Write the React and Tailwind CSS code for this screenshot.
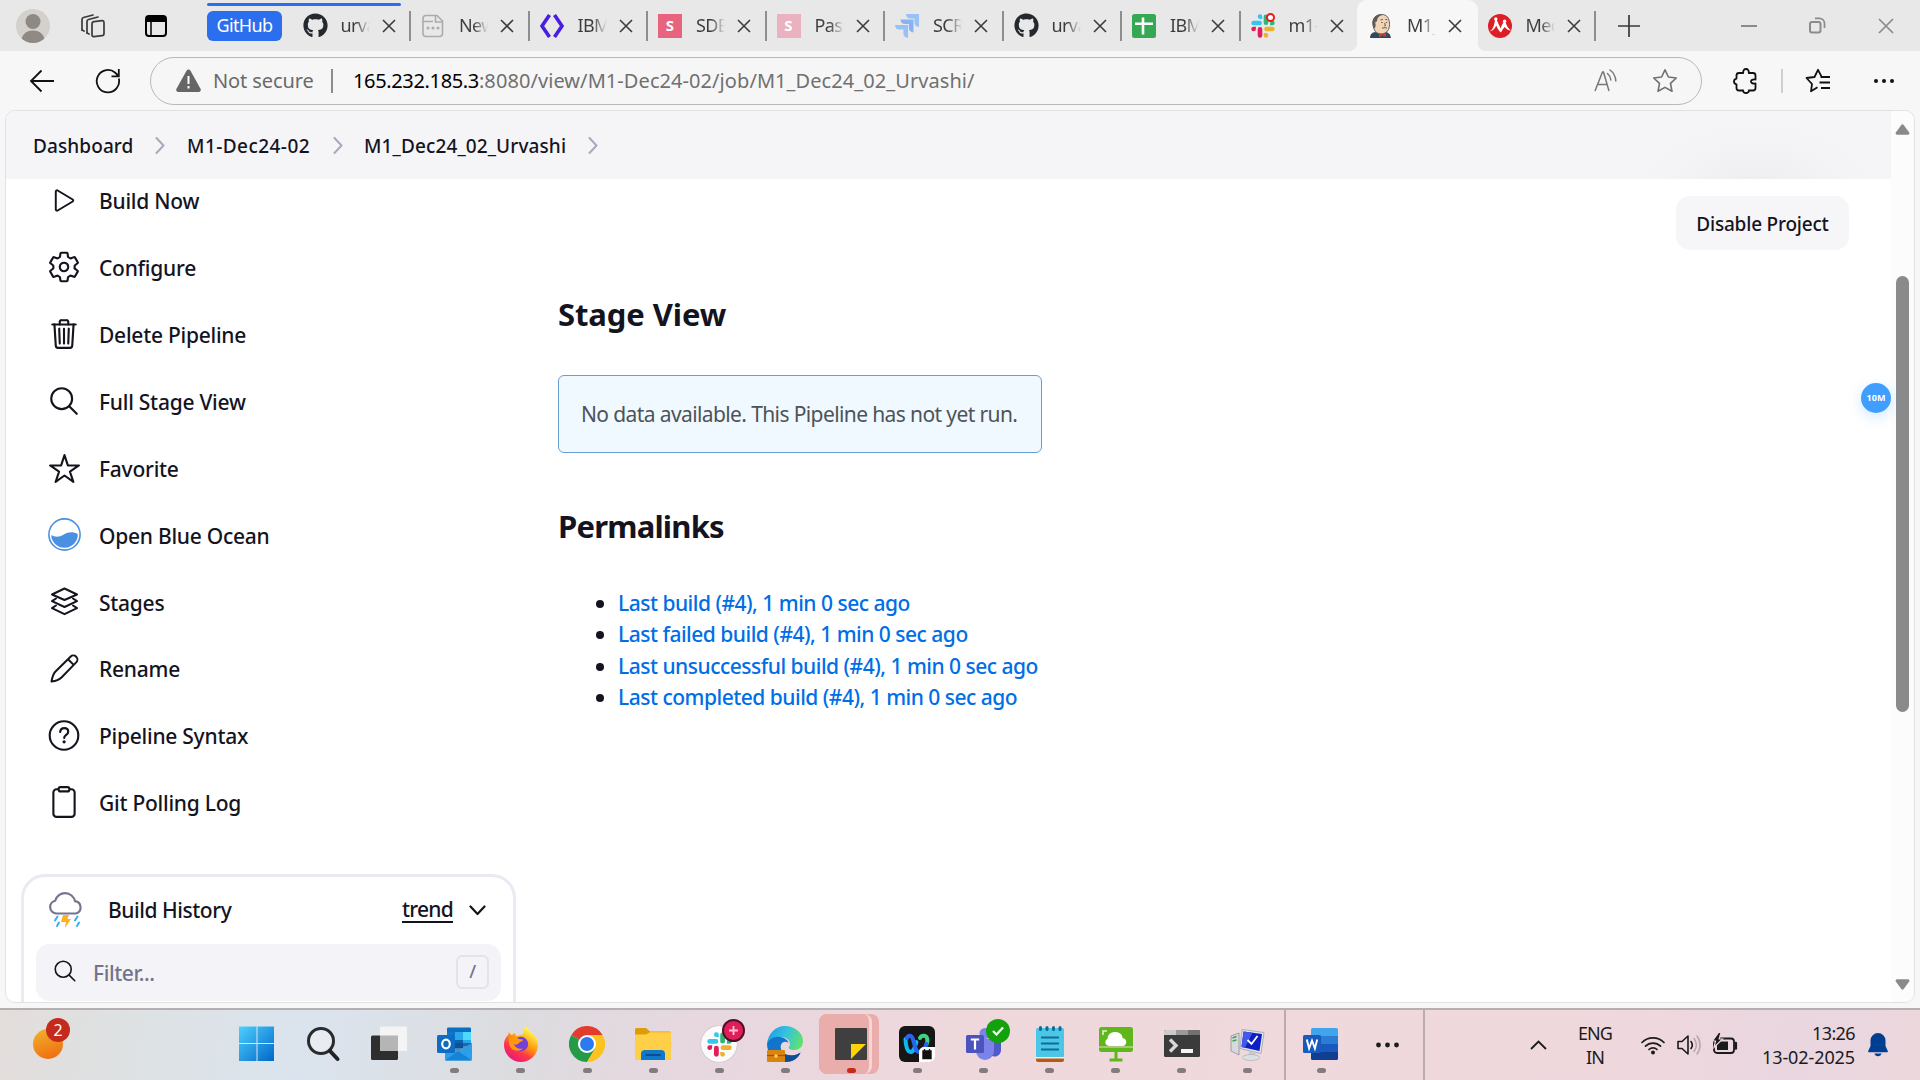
import React from "react";
import { FaGithub } from "react-icons/fa";
import {
  IoPlayOutline,
  IoSettingsOutline,
  IoTrashOutline,
  IoSearchOutline,
  IoStarOutline,
  IoClipboardOutline,
} from "react-icons/io5";

/* ---------- shared drawing helpers ---------- */

function Svg({ w = 24, h, vb, className = "", children }) {
  return (
    <svg
      width={w}
      height={h || w}
      viewBox={vb || `0 0 ${w} ${h || w}`}
      fill="none"
      className={`block shrink-0 ${className}`}
    >
      {children}
    </svg>
  );
}

const CloseX = () => (
  <Svg w={14}>
    <path d="M1 1L13 13M13 1L1 13" stroke="#3c3c3c" strokeWidth="1.6" />
  </Svg>
);

function SlackMark({ w = 24 }) {
  return (
    <Svg w={w} vb="0 0 24 24">
      <g strokeWidth="4.6" strokeLinecap="round">
        <path d="M2.6 9H8.6" stroke="#36c5f0" />
        <path d="M15 2.8V8.8" stroke="#2eb67d" />
        <path d="M15.4 15H21.4" stroke="#ecb22e" />
        <path d="M9 15.4V21.4" stroke="#e01e5a" />
      </g>
      <path d="M9 0.3a2.3 2.3 0 0 0 0 4.6h2.3V2.6A2.3 2.3 0 0 0 9 .3z" fill="#36c5f0" />
      <path d="M23.7 9a2.3 2.3 0 0 0-4.6 0v2.3h2.3A2.3 2.3 0 0 0 23.7 9z" fill="#2eb67d" />
      <path d="M15 23.7a2.3 2.3 0 0 0 0-4.6h-2.3v2.3a2.3 2.3 0 0 0 2.3 2.3z" fill="#ecb22e" />
      <path d="M.3 15a2.3 2.3 0 0 0 4.6 0v-2.3H2.6A2.3 2.3 0 0 0 .3 15z" fill="#e01e5a" />
    </Svg>
  );
}

/* ---------- tab favicons ---------- */

const GithubIcon = () => <FaGithub size={25} color="#24292f" className="-mr-px block shrink-0" />;

const NewPageIcon = () => (
  <Svg w={24}>
    <path d="M5 1.500h11l5.500 5.500v12.500a3 3 0 0 1-3 3H5a3 3 0 0 1-3-3v-15a3 3 0 0 1 3-3z" stroke="#ababab" strokeWidth="1.600" />
    <path d="M2 7.500h10M14.500 2v6h7" stroke="#ababab" strokeWidth="1.600" />
    <g fill="#ababab">
      <circle cx="7" cy="14" r="1.500" />
      <circle cx="12" cy="14" r="1.500" />
      <circle cx="17" cy="14" r="1.500" />
    </g>
  </Svg>
);

const IbmIcon = () => (
  <Svg w={24}>
    <path d="M9.500 1L2 12l7.500 11M14.500 1L22 12l-7.500 11" stroke="#4a1ee0" strokeWidth="3.600" />
  </Svg>
);

const SIcon = ({ faded }) => (
  <div
    className={`flex h-6 w-6 shrink-0 items-center justify-center text-[15px] font-bold text-white ${
      faded ? "bg-[#eab2bf]" : "bg-[#e8637d]"
    }`}
  >
    S
  </div>
);

const JiraIcon = () => (
  <Svg w={24}>
    <path d="M11 0h13v13c-3 0-4.600-2-4.600-4.400V4.600h-4C13 4.600 11 3 11 0z" fill="#99c1f7" />
    <path d="M5.500 5.500h13v13c-3 0-4.600-2-4.600-4.400v-4h-4c-2.400 0-4.400-1.600-4.400-4.600z" fill="#86b3f3" />
    <path d="M0 11h13v13c-3 0-4.600-2-4.600-4.400v-4h-4C2 15.600 0 14 0 11z" fill="#99c1f7" />
  </Svg>
);

const SheetsIcon = () => (
  <Svg w={24}>
    <rect width="24" height="24" rx="2.500" fill="#34a853" />
    <path d="M11 3.500v17M3 9.800h18" stroke="#fff" strokeWidth="2.600" />
  </Svg>
);

const SlackTabIcon = () => (
  <div className="relative">
    <SlackMark />
    <div className="absolute -top-px right-0 h-[9px] w-[9px] rounded-full border-2 border-[#f01818] bg-white" />
  </div>
);

const JenkinsIcon = () => (
  <Svg w={24}>
    <path d="M1 24c0-3.500 1.500-5.500 5-6l6 2.500 4-2.500c3.500 0 5.500 2.500 6 6z" fill="#2f4a5e" />
    <path d="M5.500 16C3.500 12 3 6 6 3 9-.2 16-.5 18.500 3c2.300 3.400 2.700 8.500 1 12.500-1.600 3.400-5 4.800-8 4.300-2.800-.3-5-1.500-6-3.800z" fill="#f0d6b7" stroke="#4a4038" strokeWidth=".8" />
    <path d="M5.300 14.500C2.800 11 2.800 5.500 6 2.700 8 .8 11 .3 14 .7 10 1.500 8 4 8 7.500c-1.400-.3-2 1-1.500 2.500.3 1.500.2 3-1.200 4.500z" fill="#5f5b58" />
    <path d="M11.500 6l2.300-.6M16.300 5.400l2 .4M12.200 8.500h1.400M16.800 8.500h1.400M15.600 9l.8 2.600-1.200.5M13 14.300c1.500-.8 3.500-.8 5-.2" stroke="#403830" strokeWidth=".8" />
    <path d="M10 19l3.500 1.400 3.500-2 .3 4.600-3.600-1.500L10 23.500z" fill="#d33833" />
  </Svg>
);

const MendeleyIcon = () => (
  <Svg w={24}>
    <circle cx="12" cy="12" r="12" fill="#dc1f26" />
    <path
      d="M1.500 17.500c3.500-2 4.700-6 5.500-11.500h1.700c1.500 3 2.800 6 3.800 8.500 1-3 2-5 3.300-6.500h1.700c1 3.500 2.500 6.500 5.500 8.500-3-.2-4.800-1.500-6.300-3.500-1.500 1.500-2.600 3.500-3.700 5.500-2.200-1.500-3.500-4-4.700-7-1.600 3-3.300 5.500-6.800 6z"
      fill="#fff"
    />
    <circle cx="7.800" cy="5" r="1.700" fill="#fff" />
    <circle cx="16.600" cy="7.300" r="1.700" fill="#fff" />
  </Svg>
);

const TABS = [
  { icon: <GithubIcon />, label: "urva" },
  { icon: <NewPageIcon />, label: "New" },
  { icon: <IbmIcon />, label: "IBM" },
  { icon: <SIcon />, label: "SDE" },
  { icon: <SIcon faded />, label: "Pass" },
  { icon: <JiraIcon />, label: "SCR" },
  { icon: <GithubIcon />, label: "urva" },
  { icon: <SheetsIcon />, label: "IBM" },
  { icon: <SlackTabIcon />, label: "m1-", noDivider: true },
  { icon: <JenkinsIcon />, label: "M1_", active: true },
  { icon: <MendeleyIcon />, label: "Med" },
];

function Tab({ icon, label, active, noDivider }) {
  return (
    <div className="relative flex h-[51px] w-[118.5px] shrink-0 items-center">
      {active && (
        <div className="absolute inset-y-0 left-[-2px] right-0 rounded-t-[10px] bg-[#f7f7f7]">
          <div className="absolute bottom-0 -left-2 h-2 w-2 bg-[radial-gradient(circle_at_0_0,#e8e8e8_8px,#f7f7f7_8px)]" />
          <div className="absolute bottom-0 -right-2 h-2 w-2 bg-[radial-gradient(circle_at_100%_0,#e8e8e8_8px,#f7f7f7_8px)]" />
        </div>
      )}
      <div className="relative flex flex-1 items-center pl-[10px]">
        {icon}
        <div className="ml-[14px] w-[29px] overflow-hidden whitespace-nowrap bg-[linear-gradient(90deg,#3c3c3c_50%,transparent)] bg-clip-text text-[18px] tracking-[-0.6px] text-transparent">
          {label}
        </div>
        <div className="ml-[12px]">
          <CloseX />
        </div>
      </div>
      {!active && !noDivider && <div className="h-[30px] w-[2px] bg-[#8e8e8e]" />}
    </div>
  );
}

function TabBar() {
  return (
    <div className="flex h-[51px] items-center bg-[#e8e8e8]">
      <div className="ml-4 h-[34px] w-[34px] overflow-hidden rounded-full bg-[#d4d1cc]">
        <Svg w={34}>
          <circle cx="17" cy="12.500" r="7.500" fill="#8f8984" />
          <path d="M5 34c0-8 5-12.500 12-12.500S29 26 29 34z" fill="#8f8984" />
        </Svg>
      </div>
      <Svg w={26} className="ml-[30px]">
        <g stroke="#3a3a3a" strokeWidth="1.700" strokeLinejoin="round" strokeLinecap="round">
          <rect x="12" y="8" width="12" height="15" rx="2" transform="skewY(-6) translate(0 2)" />
          <path d="M7 20V8.500a2 2 0 0 1 1.500-2L18 4M2 17V6.500a2 2 0 0 1 1.500-2L13 2" />
          <path d="M7 20l2 1M2 17l2 1" />
        </g>
      </Svg>
      <Svg w={22} className="ml-[39px]">
        <rect x="1" y="1" width="20" height="20" rx="3" stroke="#000" strokeWidth="2" />
        <path d="M1 2h20v5H1z" fill="#000" />
        <path d="M6 7v14" stroke="#000" strokeWidth="1.500" />
      </Svg>
      <div className="relative ml-[40px] flex h-[51px] items-center">
        <div className="absolute left-0 top-[3px] h-[3px] w-[194px] rounded-full bg-[#2b6fee]" />
        <div className="flex h-[30px] w-[75px] items-center justify-center rounded-[6px] bg-[#2b6fee] text-[18px] tracking-[-0.6px] text-white">
          GitHub
        </div>
      </div>
      <div className="ml-[10.5px] flex">
        {TABS.map((t, i) => (
          <Tab key={i} {...t} />
        ))}
      </div>
      <Svg w={22} className="ml-[21.5px]">
        <path d="M11 0v22M0 11h22" stroke="#3a3a3a" strokeWidth="1.700" />
      </Svg>
      <div className="ml-auto mr-[26px] flex items-center gap-[52px]">
        <div className="h-[2px] w-[16px] bg-[#8b8b8b]" />
        <Svg w={17}>
          <rect x="1" y="5" width="10.500" height="10.500" rx="2" stroke="#8b8b8b" strokeWidth="2" />
          <path d="M6 1.300h4.500a5 5 0 0 1 5 5V11" stroke="#8b8b8b" strokeWidth="1.700" />
        </Svg>
        <Svg w={16}>
          <path d="M1 1L15 15M15 1L1 15" stroke="#8b8b8b" strokeWidth="1.700" />
        </Svg>
      </div>
    </div>
  );
}

/* ---------- address bar ---------- */

function Toolbar() {
  return (
    <div className="flex h-[59px] items-center bg-[#f7f7f7]">
      <Svg w={26} h={24} className="ml-[29px]">
        <path d="M25 12H2M12.500 1.500L2 12l10.500 10.500" stroke="#111" strokeWidth="1.800" />
      </Svg>
      <Svg w={26} className="ml-[40px]">
        <path d="M23.800 10.500A11.200 11.200 0 1 1 20 4.500L23.500 8M23.800 1v7.300h-7.300" stroke="#111" strokeWidth="1.800" />
      </Svg>
      <div className="ml-[29px] flex h-[48px] w-[1552px] items-center rounded-full border border-[#b9b9b9] bg-[#f6f6f6]">
        <Svg w={25} h={23} className="ml-[25px]">
          <path d="M10.500 1.700a2.300 2.300 0 0 1 4 0l10 18a2.200 2.200 0 0 1-2 3.300h-20a2.200 2.200 0 0 1-2-3.300z" fill="#666" />
          <path d="M12.500 7v8M12.500 17v2.600" stroke="#fff" strokeWidth="2" />
        </Svg>
        <div className="ml-[12px] w-[104px] pt-px text-[20px] tracking-[-0.1px] text-[#6a6a6a]">Not secure</div>
        <div className="ml-[14px] h-6 w-[2px] bg-[#8c8c8c]" />
        <div className="ml-[20px] whitespace-nowrap pt-px text-[20px]">
          <span className="tracking-[-0.35px] text-black">165.232.185.3</span>
          <span className="tracking-[0.07px] text-[#707070]">:8080/view/M1-Dec24-02/job/M1_Dec24_02_Urvashi/</span>
        </div>
        <Svg w={24} className="ml-auto">
          <path d="M1 22L8.500 3h1L15 22M3.500 15.500h9.500" stroke="#777" strokeWidth="1.500" />
          <path d="M13.500 4.500c2 1.600 3 3.700 3.300 6.500M16 1c3.500 2.500 5.500 6 5.800 11" stroke="#777" strokeWidth="1.500" strokeLinecap="round" />
        </Svg>
        <Svg w={26} className="ml-[34px] mr-[23px]">
          <path d="M13 1.800l3.400 7.200 7.900 1-5.800 5.400 1.500 7.900-7-3.900-7 3.900 1.500-7.900L1.700 10l7.900-1z" stroke="#707070" strokeWidth="1.600" strokeLinejoin="round" />
        </Svg>
      </div>
      <Svg w={26} className="ml-[31px]">
        <path d="M6 5h4.200c-.2-2.600 1-4 2.800-4s3 1.400 2.800 4H20a2.500 2.500 0 0 1 2.500 2.500v4c-3-.4-4.500.6-4.500 2s1.500 2.400 4.500 2V20A2.500 2.500 0 0 1 20 22.500h-4.200c.2 1.500-1 2.500-2.800 2.500s-3-1-2.800-2.500H6A2.500 2.500 0 0 1 3.500 20v-3.700C1.800 16 1 15 1 13.500s.8-2.500 2.500-2.800V7.500A2.500 2.500 0 0 1 6 5z" stroke="#111" strokeWidth="1.800" strokeLinejoin="round" />
      </Svg>
      <div className="ml-[22px] h-6 w-[2px] bg-[#cfcfcf]" />
      <Svg w={26} className="ml-[22px]">
        <path d="M12.500 19.300L6 23.300 7 16 1.500 10l8-1L13 1.800l3.300 6.400" stroke="#111" strokeWidth="1.800" strokeLinejoin="round" />
        <path d="M15.500 9H25M14.500 14.500H25M16 20h9" stroke="#111" strokeWidth="1.800" />
      </Svg>
      <Svg w={22} h={6} className="ml-[42px]">
        <g fill="#111">
          <circle cx="3" cy="3" r="2" />
          <circle cx="11" cy="3" r="2" />
          <circle cx="19" cy="3" r="2" />
        </g>
      </Svg>
    </div>
  );
}

/* ---------- Jenkins page ---------- */

const Chevron = ({ className = "" }) => (
  <Svg w={10} h={17} className={className}>
    <path d="M1.500 1l7 7.500-7 7.500" stroke="#a9a8bd" strokeWidth="2" strokeLinecap="round" strokeLinejoin="round" />
  </Svg>
);

const OceanIcon = () => (
  <Svg w={33}>
    <circle cx="16.500" cy="16.500" r="15.600" stroke="#4a90e2" strokeWidth="1.600" />
    <path d="M3.200 17c3.500 2.300 8 2.300 12.300-.2 5-3 9.500-3.200 14.300-.8A13.300 13.300 0 0 1 3.200 17z" fill="#4a90e2" />
  </Svg>
);

const StagesIcon = () => (
  <Svg w={29} className="text-[#14141f]">
    <g stroke="currentColor" strokeWidth="2" strokeLinejoin="round" strokeLinecap="round">
      <path d="M14.500 1.500l12.500 6.000-12.500 5.500L2 7.500z" />
      <path d="M6 11.500l-4 2.700 12.500 5.800L27 14.200l-4-2.700" />
      <path d="M6 18.500l-4 2.700 12.500 6L27 21.200l-4-2.700" />
    </g>
  </Svg>
);

const PencilIcon = () => (
  <Svg w={29}>
    <path
      d="M1.500 27.500c.8-4.500 1.500-7.500 4-10L20.500 2.700a3.900 3.900 0 0 1 5.700 5.700L11.500 23.500c-2.500 2.500-5.500 3.500-10 4zM18 5.200l5.700 5.700"
      stroke="#14141f"
      strokeWidth="2"
      strokeLinejoin="round"
    />
  </Svg>
);

const HelpIcon = () => (
  <Svg w={32}>
    <circle cx="16" cy="15.500" r="14.300" stroke="#14141f" strokeWidth="2.100" />
    <path d="M12.200 12c.2-2.400 1.800-3.800 4-3.800 2.300 0 4 1.400 4 3.500 0 3.200-4 3.200-4 6.200" stroke="#14141f" strokeWidth="2.200" strokeLinecap="round" />
    <circle cx="16.100" cy="21.800" r="1.600" fill="#14141f" />
  </Svg>
);

const MENU = [
  { label: "Build Now", icon: <IoPlayOutline size={31} /> },
  { label: "Configure", icon: <IoSettingsOutline size={34} /> },
  { label: "Delete Pipeline", icon: <IoTrashOutline size={34} /> },
  { label: "Full Stage View", icon: <IoSearchOutline size={34} /> },
  { label: "Favorite", icon: <IoStarOutline size={33} /> },
  { label: "Open Blue Ocean", icon: <OceanIcon /> },
  { label: "Stages", icon: <StagesIcon /> },
  { label: "Rename", icon: <PencilIcon /> },
  { label: "Pipeline Syntax", icon: <HelpIcon /> },
  { label: "Git Polling Log", icon: <IoClipboardOutline size={34} /> },
];

const StormIcon = () => (
  <Svg w={36} h={36}>
    <path d="M8 21.500a6.500 6.500 0 0 1-.8-12.800A10.200 10.200 0 0 1 27 9.200a6.300 6.300 0 0 1 1 12.300z" stroke="#75758f" strokeWidth="2.200" strokeLinejoin="round" />
    <path d="M15 23h6l-1.500 4H23l-6 9 .8-6H13z" fill="#feb21f" />
    <path d="M9.500 24.500l-2.500 4M11 30.500L9 34M29.500 24.500l-2.500 4M31 30.500L29 34" stroke="#3aafe8" strokeWidth="2" strokeLinecap="round" />
  </Svg>
);

function Sidebar() {
  return (
    <div className="w-[552px] shrink-0 text-[21px] font-medium tracking-[-0.25px]">
      <div className="mt-[-12px]">
        {MENU.map((m) => (
          <div key={m.label} className="flex h-[66.9px] items-center pl-[40px]">
            <div className="flex w-[36px] justify-center">{m.icon}</div>
            <div className="ml-[17px] pt-[3px]">{m.label}</div>
          </div>
        ))}
      </div>
      <div className="ml-[15px] mt-[38px] h-[200px] w-[495px] rounded-[24px] border-[3px] border-[#eaeaf3] px-[12px]">
        <div className="flex h-[67px] items-center pl-[12px]">
          <StormIcon />
          <div className="ml-[24px] tracking-[-0.45px]">Build History</div>
          <div className="ml-auto border-b-2 border-[#14141f] text-[21px] leading-[24px] tracking-[-0.75px]">trend</div>
          <Svg w={17} h={11} className="ml-[16px] mr-[15px]">
            <path d="M1.500 1.500l7 7.500 7-7.500" stroke="#14141f" strokeWidth="2.200" strokeLinecap="round" strokeLinejoin="round" />
          </Svg>
        </div>
        <div className="flex h-[57px] items-center rounded-[14px] bg-[#f3f3f8] pl-[16px] pr-[12px]">
          <IoSearchOutline size={26} className="-mt-[2px]" />
          <div className="ml-[15px] pt-[2px] tracking-[-0.4px] text-[#73738c]">Filter...</div>
          <div className="-mt-px ml-auto flex h-[34px] w-[33px] items-center justify-center rounded-[6px] border-2 border-[#e3e3ec] text-[18px] text-[#73738c]">
            /
          </div>
        </div>
      </div>
    </div>
  );
}

const LINKS = [
  "Last build (#4), 1 min 0 sec ago",
  "Last failed build (#4), 1 min 0 sec ago",
  "Last unsuccessful build (#4), 1 min 0 sec ago",
  "Last completed build (#4), 1 min 0 sec ago",
];

function MainPanel() {
  return (
    <div className="flex flex-1 flex-col items-start">
      <div className="mr-[42px] mt-[17px] flex h-[54px] w-[173px] items-center justify-center self-end rounded-[14px] bg-[#f6f6f9] pt-[2px] text-[19px] font-medium tracking-[-0.2px]">
        Disable Project
      </div>
      <h2 className="mt-[44px] text-[31px] font-bold leading-[40px] tracking-[-0.1px]">Stage View</h2>
      <div className="mt-[41px] flex h-[78px] w-[484px] items-center rounded-[6px] border border-[#6a9fd4] bg-[#f0f9ff] pl-[22px] pt-[2px] text-[21px] tracking-[-0.61px] text-[#4d5358]">
        <span className="whitespace-nowrap">No data available. This Pipeline has not yet run.</span>
      </div>
      <h2 className="mt-[53px] text-[31px] font-bold leading-[40px] tracking-[-0.8px]">Permalinks</h2>
      <ul className="mt-[42px] text-[21px] font-medium leading-[31.4px] tracking-[-0.5px]">
        {LINKS.map((l) => (
          <li key={l} className="flex items-center">
            <span className="ml-[38px] h-2 w-2 rounded-full bg-[#14141f]" />
            <a className="ml-[14px] whitespace-nowrap text-[#006ee6]">{l}</a>
          </li>
        ))}
      </ul>
    </div>
  );
}

function Page() {
  return (
    <div className="relative mx-[5px] flex h-[893px] overflow-hidden rounded-[10px] border border-[#e2e2e4] bg-white text-[#14141f]">
      <div className="flex flex-1 flex-col">
        <div className="flex h-[68px] shrink-0 items-center bg-[#f5f5f8] bg-[radial-gradient(ellipse_110px_60px_at_1750px_75px,#eeeef1,transparent)] pl-[27px] text-[19px] font-medium">
          <div className="w-[101px] pt-[2px] tracking-[0.1px]">Dashboard</div>
          <Chevron className="ml-[21px]" />
          <div className="ml-[22px] w-[124px] pt-[2px] tracking-[0.45px]">M1-Dec24-02</div>
          <Chevron className="ml-[22px]" />
          <div className="ml-[21px] w-[204px] pt-[2px] tracking-[0.12px]">M1_Dec24_02_Urvashi</div>
          <Chevron className="ml-[20px]" />
        </div>
        <div className="flex min-h-0 flex-1 overflow-hidden">
          <Sidebar />
          <MainPanel />
        </div>
      </div>
      <div className="flex w-[23px] shrink-0 flex-col items-center bg-[#fcfcfc]">
        <Svg w={15} h={11} className="mt-[13px]">
          <path d="M6.300 1a1.500 1.500 0 0 1 2.400 0l5.500 7.500a1.500 1.500 0 0 1-1.200 2.300H2A1.500 1.500 0 0 1 .8 8.500z" fill="#8a8a8a" />
        </Svg>
        <div className="mt-[141px] h-[436px] w-[13px] rounded-full bg-[#8a8a8a]" />
        <Svg w={15} h={11} className="mb-[12px] mt-auto">
          <path d="M6.300 10a1.500 1.500 0 0 0 2.400 0l5.500-7.500A1.500 1.500 0 0 0 13 .2H2A1.500 1.500 0 0 0 .8 2.500z" fill="#8a8a8a" />
        </Svg>
      </div>
      <div className="absolute left-[1855px] top-[272px] flex h-[30px] w-[30px] items-center justify-center rounded-full bg-[#409eff] text-[9px] font-bold text-white shadow-[0_4px_14px_rgba(64,158,255,0.25)]">
        10M
      </div>
    </div>
  );
}

/* ---------- taskbar ---------- */

const WindowsIcon = () => (
  <Svg w={36}>
    <defs>
      <linearGradient id="win" x1="0" y1="0" x2="1" y2="1">
        <stop stopColor="#4fd0ff" />
        <stop offset="1" stopColor="#0067c9" />
      </linearGradient>
    </defs>
    <path d="M0 .5h17.500V17H0zM18.500.5H35V17H18.500zM0 18h17.500v17H0zM18.500 18H35v17H18.500z" fill="url(#win)" />
  </Svg>
);
const SearchIcon = () => (
  <Svg w={36}>
    <circle cx="16" cy="15" r="12.500" stroke="#2b2b2b" strokeWidth="3" fill="#ffffff55" />
    <path d="M25 25l7.500 8" stroke="#222" strokeWidth="4" strokeLinecap="round" />
  </Svg>
);
const TaskViewIcon = () => (
  <Svg w={36}>
    <rect x="0" y="9.500" width="27" height="24.500" rx="1.500" fill="#2e2e2e" />
    <rect x="9" y=".5" width="27" height="24.500" rx="1.500" fill="#f4f4f4" />
    <path d="M9 9.500h18V25H9z" fill="#b5b5b5" />
  </Svg>
);
const OutlookIcon = () => (
  <Svg w={36}>
    <path d="M11 1.500h22a1 1 0 0 1 1 1V18H10V2.500a1 1 0 0 1 1-1z" fill="#0a6fc0" />
    <path d="M10 6h8v14h-8z" fill="#1274c8" />
    <path d="M18 6h8v8h-8z" fill="#28a8ea" />
    <path d="M26 6h8v8h-8z" fill="#50d9ff" />
    <path d="M18 14h8v8h-8z" fill="#0a64b0" />
    <path d="M26 14h8v6h-8z" fill="#28a8ea" />
    <path d="M35 17v16a1.500 1.500 0 0 1-1.500 1.500h-24A1.500 1.500 0 0 1 8 33V18l13 7z" fill="#2d9fe8" />
    <path d="M35 17L21 25 10 19v-2h24z" fill="#0a4a8c" opacity=".65" />
    <path d="M8 34.500L21 25l14 9.500z" fill="#1583d8" />
    <rect x="0" y="9" width="18" height="18" rx="1.500" fill="#0f6cc4" />
    <ellipse cx="9" cy="18" rx="3.800" ry="4.300" stroke="#fff" strokeWidth="2.200" />
  </Svg>
);
const FirefoxIcon = () => (
  <Svg w={36}>
    <defs>
      <linearGradient id="ff" x1=".85" y1=".05" x2=".25" y2="1">
        <stop offset=".1" stopColor="#fff44f" />
        <stop offset=".45" stopColor="#ff980e" />
        <stop offset=".7" stopColor="#ff3647" />
        <stop offset="1" stopColor="#e31587" />
      </linearGradient>
    </defs>
    <path d="M23 0c2 2 3 5 6 7 4 3 6 7 6 12a17 17 0 0 1-34 0c0-5 2-8 4.500-10.500V6l3 3 3.500-2 1 3c4-1 6-1 8-3-.5-3 0-5 2-7z" fill="url(#ff)" />
    <circle cx="18" cy="18" r="7.200" fill="#7540d8" />
    <path d="M6 12c4-2 8-1 10 1l4 .5c0 2-3 2-4 3.500-2 3-5 1-5 1 1 4 5 5.500 9 4.500-6 5-14 1-14-6z" fill="#ff980e" />
  </Svg>
);
const ChromeIcon = () => (
  <Svg w={36}>
    <path d="M18 18L2.400 9A18 18 0 0 1 33.600 9z" fill="#e33b2e" />
    <path d="M18 18L2.400 9A18 18 0 0 0 18 36l8-13z" fill="#259a48" />
    <path d="M33.600 9A18 18 0 0 1 18 36l8-13.500L18 9z" fill="#fcc31e" />
    <circle cx="18" cy="18" r="9" fill="#fff" />
    <circle cx="18" cy="18" r="7" fill="#2b7af0" />
  </Svg>
);
const FolderIcon = () => (
  <Svg w={36}>
    <path d="M0 3.500A1.500 1.500 0 0 1 1.500 2H11l4 3.500h19.500A1.500 1.500 0 0 1 36 7v8H0z" fill="#dd9c09" />
    <path d="M0 8.500h11L15 6.300h21V33a1 1 0 0 1-1 1H1a1 1 0 0 1-1-1z" fill="#ffcf48" />
    <path d="M6 34V28a4 4 0 0 1 4-4h16a4 4 0 0 1 4 4v6z" fill="#0f78c8" />
    <path d="M11 29h14" stroke="#0a4f90" strokeWidth="2" strokeLinecap="round" />
  </Svg>
);
const SlackIcon = () => (
  <div className="relative flex h-9 w-9 items-center justify-center rounded-full bg-[#fbfbfb] shadow-[0_0_1px_#888]">
    <SlackMark w={25} />
    <div className="absolute -right-[8px] -top-[7px] flex h-[23px] w-[23px] items-center justify-center rounded-full border-2 border-[#4b1226] bg-[#e01e5a]">
      <Svg w={9}>
        <path d="M4.500 0v9M0 4.500h9" stroke="#ffc2d4" strokeWidth="1.800" />
      </Svg>
    </div>
  </div>
);
const EdgeIcon = () => (
  <Svg w={36}>
    <defs>
      <linearGradient id="edge" x1="0" y1=".2" x2="1" y2=".5">
        <stop stopColor="#1b9de0" />
        <stop offset=".5" stopColor="#35c1e0" />
        <stop offset="1" stopColor="#5fe070" />
      </linearGradient>
    </defs>
    <path d="M0 18C1 8 8 0 18 0s18 7 18 15c0 6-4 9-9 9-4 0-6-1.500-5-3 3-4-1-10-8-10C7 11 2 14 0 18z" fill="url(#edge)" />
    <path d="M0 18c1-4 7-8 13-7 5 .8 8 3 8.500 6-4-3-9 0-7.500 6 1.500 6 8 8 13 6.500 3-.8 5-1.800 6.500-3C31 33 25 36 18 36 8 36 0 28 0 18z" fill="#1374cc" />
    <path d="M15 25c3 5 12 6 18.500 1.500C31 33 25 36 18 36z" fill="#0e4f94" />
    <rect x="0" y="24" width="18" height="12" rx="1" fill="#d98310" />
    <path d="M0 29.500h18" stroke="#9a560c" strokeWidth="1.200" />
    <rect x="7.500" y="28.500" width="3" height="3" fill="#ffd75a" />
  </Svg>
);
const StickyIcon = () => (
  <div className="relative flex h-9 w-9 items-center justify-center">
    <div className="absolute -left-[14px] -top-[12px] h-[60px] w-[60px] rounded-[8px] bg-[#e9aeab]" />
    <div className="absolute -left-[14px] -top-[12px] h-[60px] w-[53px] rounded-[8px] border-r-[3px] border-[#f4d6d6] bg-[#e9aeab]" />
    <Svg w={32} className="relative">
      <rect width="32" height="32" rx="1" fill="#3f3f3f" />
      <path d="M16 16h15L16 31z" fill="#fcd20a" />
    </Svg>
  </div>
);
const WebexIcon = () => (
  <Svg w={36}>
    <rect width="36" height="36" rx="6" fill="#161616" />
    <g strokeWidth="4" strokeLinecap="round">
      <path d="M21 12c2-3.500 6-2.500 7 0 .8 2 .3 4.500-.5 6.500" stroke="#3ed37c" />
      <path d="M6.500 13c0 7 2 13 5 13 3.500 0 4.500-6 6-10" stroke="#10b6f0" />
      <path d="M8 12c1-3 4-3 5.500 0C16 18 16 26 20 26c3.500 0 6-3.500 7.500-8" stroke="#2b63f0" />
    </g>
    <path d="M20 26a5 5 0 0 1 5-5h11v10a5 5 0 0 1-5 5H20z" fill="#fff" />
    <path d="M24 25h8v7.500h-8zM25.500 23v2M30.500 23v2" fill="#111" stroke="#111" strokeWidth="1.400" />
  </Svg>
);
const TeamsIcon = () => (
  <div className="relative">
    <Svg w={36}>
      <circle cx="29" cy="10" r="4" fill="#5059c9" />
      <circle cx="19" cy="7.500" r="5.500" fill="#7b83eb" />
      <path d="M24 13h11v11a6.500 6.500 0 0 1-10 5.500z" fill="#5059c9" />
      <path d="M10 13h18v12a9 9 0 0 1-18 0z" fill="#7b83eb" />
      <rect x="0" y="9" width="18" height="18" rx="1.500" fill="#4b53bc" />
      <path d="M4.800 13.500h8.400M9 13.500v10" stroke="#fff" strokeWidth="2.200" />
    </Svg>
    <div className="absolute -right-[8px] -top-[7px] flex h-6 w-6 items-center justify-center rounded-full bg-[#13a10e]">
      <Svg w={12} h={10}>
        <path d="M1 5l3.500 3.500L11 1.500" stroke="#fff" strokeWidth="2.200" />
      </Svg>
    </div>
  </div>
);
const NotepadIcon = () => (
  <Svg w={28} h={36}>
    <path d="M0 31h28v3a2 2 0 0 1-2 2H2a2 2 0 0 1-2-2z" fill="#b65a12" />
    <rect x="0" y="2" width="28" height="29.500" rx="1.500" fill="#4cc6e6" />
    <path d="M0 31h28v1.500H0z" fill="#f4f4f4" />
    <path d="M5 11.500h18M5 17.500h18M5 23.500h18" stroke="#0a6f93" strokeWidth="2" />
    <path d="M4.500 1.500v2M11 1.500v2M17.500 1.500v2M24 1.500v2" stroke="#0a6f93" strokeWidth="3" strokeLinecap="round" />
  </Svg>
);
const CloudPcIcon = () => (
  <Svg w={34} h={36}>
    <rect x="0" y="1" width="34" height="25" rx="2.500" fill="#5fb71b" />
    <path d="M17 26v7M10.500 34h13" stroke="#5fb71b" strokeWidth="3" />
    <path d="M0 21h34" stroke="#efd9dc" strokeWidth="1.200" />
    <path d="M11 20c-6 0-5.500-6-2.500-7C8.500 8 13 5.500 17 6s6.500 2.500 6.500 6c5 .5 5 8 0 8z" fill="#fff" />
    <path d="M4 9V5h4" stroke="#dff3cf" strokeWidth="1.600" />
  </Svg>
);
const TerminalIcon = () => (
  <Svg w={36}>
    <rect x="0" y="4" width="36" height="27" rx="1.500" fill="#3b3b3b" />
    <path d="M0 5.500A1.500 1.500 0 0 1 1.500 4H12v5H0z" fill="#cbcbcb" />
    <path d="M12 4h12v5H12z" fill="#9a9a9a" />
    <path d="M24 4h10.500A1.500 1.500 0 0 1 36 5.500V9H24z" fill="#717171" />
    <path d="M6 13.500l6 6-6 6" stroke="#d8d8d8" strokeWidth="3.400" />
    <path d="M17 25h12" stroke="#f4f4f4" strokeWidth="4" />
  </Svg>
);
const RemoteIcon = () => (
  <Svg w={36}>
    <path d="M1 10l8-3v22l-8-4z" fill="#d6d9de" stroke="#8a8f98" strokeWidth=".8" />
    <path d="M2.500 12l4-1.500M2.500 15l4-1" stroke="#3aa64a" strokeWidth="1.500" />
    <path d="M12 3.500l22 3-3 21-21-5z" fill="#e3e6eb" stroke="#9ca1aa" strokeWidth=".8" />
    <path d="M13.500 5.500l18.500 2.500-2.500 17-18-4z" fill="#0d1fc4" />
    <path d="M13.500 5.500l9 1.200-7.500 15-3.500-.7z" fill="#4258e8" />
    <path d="M17.500 14l4 4 6-8" stroke="#fff" strokeWidth="1.800" />
    <path d="M19 25.500l6 1.500 1 4h-8z" fill="#c4c8cf" />
    <ellipse cx="21" cy="31.500" rx="8.500" ry="3" fill="#dcdfe4" stroke="#a3a7ae" strokeWidth=".6" />
  </Svg>
);
const WordIcon = () => (
  <Svg w={36}>
    <path d="M8 3.500A1.500 1.500 0 0 1 9.500 2h24A1.500 1.500 0 0 1 35 3.500V10H8z" fill="#41a5ee" />
    <path d="M8 10h27v8H8z" fill="#2b7cd3" />
    <path d="M8 18h27v8H8z" fill="#185abd" />
    <path d="M8 26h27v6.500a1.500 1.500 0 0 1-1.500 1.500h-24A1.500 1.500 0 0 1 8 32.500z" fill="#103f91" />
    <rect x="0" y="9" width="18" height="18" rx="1.500" fill="#185abd" />
    <path d="M3.800 13.500l2.300 9L9 14.500l2.900 8 2.300-9" stroke="#fff" strokeWidth="1.900" />
  </Svg>
);

const APPS = [
  { icon: <WindowsIcon /> },
  { icon: <SearchIcon /> },
  { icon: <TaskViewIcon /> },
  { icon: <OutlookIcon />, dot: true },
  { icon: <FirefoxIcon />, dot: true },
  { icon: <ChromeIcon />, dot: true },
  { icon: <FolderIcon />, dot: true },
  { icon: <SlackIcon />, dot: true },
  { icon: <EdgeIcon />, dot: true },
  { icon: <StickyIcon />, dot: true, red: true },
  { icon: <WebexIcon />, dot: true },
  { icon: <TeamsIcon />, dot: true },
  { icon: <NotepadIcon />, dot: true },
  { icon: <CloudPcIcon />, dot: true },
  { icon: <TerminalIcon />, dot: true },
  { icon: <RemoteIcon />, dot: true },
];

function TaskSlot({ icon, dot, red }) {
  return (
    <div className="flex h-[70px] w-[66.1px] shrink-0 flex-col items-center pt-[16px]">
      <div className="flex h-[36px] items-center">{icon}</div>
      {dot && <div className={`relative mt-[6px] h-[5px] w-[9px] rounded-full ${red ? "bg-[#c42b1c]" : "bg-[#837c7e]"}`} />}
    </div>
  );
}

function Taskbar() {
  return (
    <div className="flex h-[72px] border-t-2 border-[#b5afb1] bg-[linear-gradient(100deg,#e3dddb_0%,#dde2e4_8%,#dbe4ee_16%,#dcdcdf_27%,#e7d7df_36%,#eed8dc_50%,#f0d9dc_66%,#efd8dd_85%,#e9d6e0_93%,#ecd7dc_100%)]">
      <div className="relative h-[70px] w-[223.500px] shrink-0">
        <div className="absolute left-[33px] top-[19px] h-[30px] w-[30px] rounded-full bg-[linear-gradient(160deg,#efb52e,#f1660b)]" />
        <div className="absolute left-[46px] top-[8px] flex h-6 w-6 items-center justify-center rounded-full bg-[#c42b1c] text-[16px] text-white">
          2
        </div>
      </div>
      {APPS.map((a, i) => (
        <TaskSlot key={i} {...a} />
      ))}
      <div className="ml-[3px] h-[70px] w-[2px] bg-[#b9abae]" />
      <div className="ml-[2px]">
        <TaskSlot icon={<WordIcon />} dot />
      </div>
      <div className="flex h-[70px] w-[69px] items-center justify-center pr-[3px]">
        <Svg w={25} h={6}>
          <g fill="#1b1b1b">
            <circle cx="3.500" cy="3" r="2.400" />
            <circle cx="12.500" cy="3" r="2.400" />
            <circle cx="21.500" cy="3" r="2.400" />
          </g>
        </Svg>
      </div>
      <div className="h-[70px] w-[2px] bg-[#b9abae]" />
      <div className="ml-auto flex h-[70px] items-center pr-[32px] text-[18px] leading-[24px] text-[#1b1b1b]">
        <Svg w={17} h={10}>
          <path d="M1 9l7.500-7.500L16 9" stroke="#1b1b1b" strokeWidth="1.800" />
        </Svg>
        <div className="ml-[30px] w-[36px] text-center tracking-[-0.9px]">
          <div>ENG</div>
          <div>IN</div>
        </div>
        <Svg w={24} h={20} className="ml-[28px]">
          <g stroke="#1b1b1b" strokeWidth="1.700" strokeLinecap="round">
            <path d="M1 7.500a15.500 15.500 0 0 1 22 0M4.500 11.200a10.500 10.500 0 0 1 15 0M8 14.500a5.700 5.700 0 0 1 8 0" />
          </g>
          <circle cx="12" cy="17.500" r="2" fill="#1b1b1b" />
        </Svg>
        <Svg w={24} h={22} className="ml-[12px]">
          <path d="M1 7.500h4l6-5.500v18l-6-5.500H1z" stroke="#1b1b1b" strokeWidth="1.600" strokeLinejoin="round" />
          <path d="M14 7.500c1.500 2 1.500 5 0 7" stroke="#1b1b1b" strokeWidth="1.600" strokeLinecap="round" />
          <path d="M17 4.500c3 4 3 9 0 13M20 2c4 5 4 13 0 18" stroke="#b5a5a9" strokeWidth="1.500" strokeLinecap="round" />
        </Svg>
        <Svg w={25} h={24} className="ml-[12px]">
          <rect x="1" y="5.500" width="20" height="14.500" rx="3" stroke="#1b1b1b" strokeWidth="1.800" />
          <path d="M4 8.500h11V17H4z" fill="#1b1b1b" />
          <path d="M22.800 10v5.500" stroke="#1b1b1b" strokeWidth="2.600" strokeLinecap="round" />
          <path d="M5.500-.5L-.5 8h3L1 14.500 9.500 6H6.200L8-.5z" fill="#1b1b1b" stroke="#efd8dd" strokeWidth="1.200" />
        </Svg>
        <div className="ml-[23px] w-[94px] text-right tracking-[-0.1px]">
          <div className="tracking-[-0.6px]">13:26</div>
          <div>13-02-2025</div>
        </div>
        <Svg w={20} h={24} className="ml-[13px]">
          <path d="M10 0a7.500 7.500 0 0 1 7.500 7.500V13l2.300 5a.8.8 0 0 1-.8 1.200H1A.8.8 0 0 1 .2 18l2.300-5V7.500A7.500 7.500 0 0 1 10 0z" fill="#003e92" />
          <path d="M6.500 20.500h7a3.600 3.600 0 0 1-7 0z" fill="#003e92" />
        </Svg>
      </div>
    </div>
  );
}

export default function App() {
  return (
    <div className="flex h-[1080px] w-[1920px] flex-col overflow-hidden bg-[#f7f7f7] font-['Noto_Sans','Open_Sans',sans-serif]">
      <TabBar />
      <Toolbar />
      <Page />
      <div className="mt-auto">
        <Taskbar />
      </div>
    </div>
  );
}
